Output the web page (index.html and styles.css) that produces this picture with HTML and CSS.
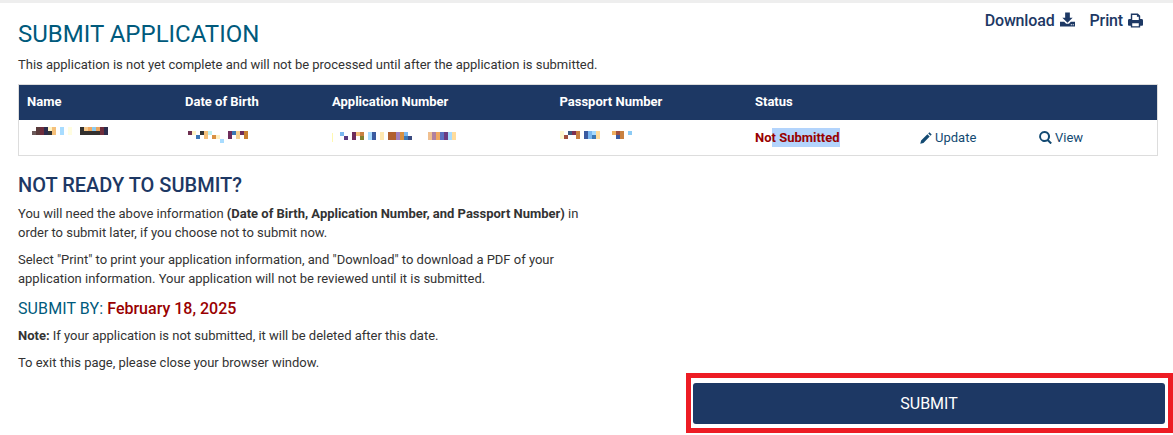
FILE: index.html
```html
<!DOCTYPE html>
<html lang="en">
<head>
    <meta charset="UTF-8">
    <meta name="viewport" content="width=device-width, initial-scale=1.0">
    <title>Submit Application</title>
    <link rel="stylesheet" href="styles.css">
</head>
<body>
    <div class="page">
        <div class="title-row">
            <h1>SUBMIT APPLICATION</h1>
            <div class="actions">
                <a href="#">Download
                    <svg class="action-icon" viewBox="0 0 16 15"><path d="M5.500 0h5v5.500h3L8 11 2.500 5.500h3zM0 10h4.500L6.500 12h3l2-2H16v5H0z"/><path fill="#fff" d="M11.500 12.500h1.200v1h-1.200zM13.500 12.500h1.200v1h-1.200z"/></svg>
                </a>
                <a href="#">Print
                    <svg class="action-icon print-icon" viewBox="0 0 16 15"><path fill-rule="evenodd" d="M3 0h7.500L13 2.500V6h1.500A1.500 1.500 0 0 1 16 7.500V12a1 1 0 0 1-1 1h-2v2H3v-2H1a1 1 0 0 1-1-1V7.500A1.500 1.500 0 0 1 1.500 6H3zM4.500 1.500V7h7V3.500H9.500v-2zM4.500 10.500v3h7v-3z"/></svg>
                </a>
            </div>
        </div>
        <p class="intro">This application is not yet complete and will not be processed until after the application is submitted.</p>

        <div class="app-table">
            <div class="app-row app-head">
                <div>Name</div>
                <div>Date of Birth</div>
                <div>Application Number</div>
                <div>Passport Number</div>
                <div>Status</div>
                <div></div>
                <div></div>
            </div>
            <div class="app-row app-body">
                <div class="cell-name">
                    <svg class="redact" width="84" height="12" viewBox="0 0 21 3">
                        <rect x="1" y="1" width="1" height="1" fill="#6b5a5a"/><rect x="2" width="1" height="2" fill="#5a3b3b"/><rect x="3" width="1" height="2" fill="#6e2d3c"/><rect x="4" width="1" height="2" fill="#2c2c4c"/><rect x="5" width="1" height="1" fill="#fff3c4"/><rect x="5" y="1" width="1" height="1" fill="#333"/><rect x="6" width="1" height="2" fill="#f5c07a"/><rect x="8" width="1" height="2" fill="#a8dcff"/><rect x="10" width="1" height="2" fill="#fffde0"/><rect x="13" width="1" height="2" fill="#33302e"/><rect x="14" width="1" height="1" fill="#f5c88a"/><rect x="15" width="1" height="1" fill="#f0a860"/><rect x="16" width="1" height="1" fill="#8ccbee"/><rect x="17" width="1" height="1" fill="#e9a45e"/><rect x="18" width="1" height="2" fill="#6e2d3c"/><rect x="19" width="1" height="2" fill="#2c2c4c"/><rect x="14" y="1" width="4" height="1" fill="#33302e"/>
                    </svg>
                </div>
                <div class="cell-dob">
                    <svg class="redact" width="64" height="12" viewBox="0 0 16 3">
                        <rect width="1" height="1" fill="#6e3050"/><rect x="1" width="1" height="1" fill="#fff3c4"/><rect x="2" y="1" width="1" height="1" fill="#3c78b4"/><rect x="3" width="1" height="1" fill="#333"/><rect x="4" width="1" height="2" fill="#f5c07a"/><rect x="5" width="1" height="1" fill="#bff0ee"/><rect x="6" y="1" width="1" height="1" fill="#d89040"/><rect x="7" y="1" width="1" height="1" fill="#ffefc0"/><rect x="8" y="2" width="1" height="1" fill="#a8dcff"/><rect x="10" width="1" height="2" fill="#6e2d5c"/><rect x="11" width="1" height="1" fill="#3c78b4"/><rect x="12" width="1" height="2" fill="#f5d090"/><rect x="13" width="1" height="1" fill="#6e2d5c"/><rect x="14" width="1" height="2" fill="#c88030"/>
                    </svg>
                </div>
                <div class="cell-app">
                    <svg class="redact" width="124" height="12" viewBox="0 0 31 3">
                        <rect y="0.250" width="0.250" height="2.250" fill="#fff8b0"/><rect x="2" width="1" height="1" fill="#7ab8f0"/><rect x="3" y="1" width="1" height="1" fill="#5a3a80"/><rect x="5" width="1" height="2" fill="#6e2d5c"/><rect x="6" width="1" height="1" fill="#f5c07a"/><rect x="7" width="1" height="1" fill="#c88040"/><rect x="7" y="1" width="1" height="1" fill="#808030"/><rect x="9" width="1" height="2" fill="#a8dcff"/><rect x="10" width="1" height="2" fill="#3a5aa0"/><rect x="12" width="1" height="2" fill="#ffe8b0"/><rect x="14" width="2" height="2" fill="#b06030"/><rect x="16" width="1" height="2" fill="#a080c0"/><rect x="17" width="1" height="2" fill="#d89040"/><rect x="18" width="1" height="1" fill="#7ab8f0"/><rect x="18" y="1" width="1" height="1" fill="#3c78b4"/><rect x="19" y="1" width="1" height="1" fill="#3a4a80"/><rect x="24" width="1" height="2" fill="#f0c090"/><rect x="25" width="1" height="2" fill="#b080a0"/><rect x="26" width="1" height="2" fill="#f0a860"/><rect x="27" width="1" height="2" fill="#5a70c0"/><rect x="28" width="1" height="2" fill="#6a3a80"/><rect x="29" width="1" height="2" fill="#a8dcff"/><rect x="30" width="1" height="2" fill="#ffdc9c"/>
                    </svg>
                </div>
                <div class="cell-pass">
                    <svg class="redact" width="72" height="12" viewBox="0 0 18 3">
                        <rect y="0" width="1" height="2" fill="#fff8d0"/><rect x="1" y="1" width="1" height="1" fill="#a05040"/><rect x="2" width="1" height="1" fill="#3c5a80"/><rect x="3" width="1" height="1" fill="#803050"/><rect x="4" width="1" height="2" fill="#c88040"/><rect x="6" width="1" height="2" fill="#3a5aa0"/><rect x="7" width="1" height="2" fill="#7ab8f0"/><rect x="8" width="1" height="1" fill="#a8dcff"/><rect x="8" y="1" width="1" height="1" fill="#3c78b4"/><rect x="9" width="1" height="2" fill="#ffdc9c"/><rect x="13" width="1" height="1" fill="#f0b060"/><rect x="14" width="1" height="1" fill="#a05040"/><rect x="14" y="1" width="1" height="1" fill="#3a5aa0"/><rect x="15" width="1" height="2" fill="#c88040"/><rect x="17" width="1" height="1" fill="#8ccbf5"/>
                    </svg>
                </div>
                <div><span class="status">No<mark>t Submitted</mark></span></div>
                <div>
                    <a href="#" class="row-link">
                        <svg class="row-icon" viewBox="0 0 13 13"><path d="M10.200.3 12.700 2.800 11.400 4.100 8.900 1.600zM8 2.500l2.500 2.500L3.700 11.800.3 12.700l.9-3.400z"/></svg>Update
                    </a>
                </div>
                <div>
                    <a href="#" class="row-link">
                        <svg class="row-icon search-icon" viewBox="0 0 13 13"><path fill-rule="evenodd" d="M5.500 0a5.500 5.500 0 0 1 4.400 8.800l3 3-1.400 1.400-3-3A5.500 5.500 0 1 1 5.500 0zM5.500 2a3.500 3.500 0 1 0 0 7 3.500 3.500 0 0 0 0-7z"/></svg>View
                    </a>
                </div>
            </div>
        </div>

        <h2>NOT READY TO SUBMIT?</h2>
        <div class="notes">
            <p>You will need the above information <b>(Date of Birth, Application Number, and Passport Number)</b> in order to submit later, if you choose not to submit now.</p>
            <p>Select "Print" to print your application information, and "Download" to download a PDF of your application information. Your application will not be reviewed until it is submitted.</p>
        </div>
        <h3>SUBMIT BY: <span class="deadline">February 18, 2025</span></h3>
        <div class="notes">
            <p><b>Note:</b> If your application is not submitted, it will be deleted after this date.</p>
            <p>To exit this page, please close your browser window.</p>
        </div>

        <div class="submit-row">
            <div class="submit-mark">
                <button class="submit-btn">SUBMIT</button>
            </div>
        </div>
    </div>
</body>
</html>
```

FILE: styles.css
```css
* {
    box-sizing: border-box;
}

body {
    margin: 0;
    font-family: Roboto, "Liberation Sans", sans-serif;
    font-size: 13px;
    color: #333;
    background: #fff;
    overflow: hidden;
}

a {
    color: #1d3864;
    text-decoration: none;
}

.page {
    border-top: 3px solid #eee;
    padding-left: 18px;
}

.title-row {
    display: flex;
    justify-content: space-between;
    align-items: flex-start;
    padding-top: 17px;
}

h1 {
    margin: 0;
    font-size: 24px;
    line-height: 28px;
    font-weight: 400;
    color: #005a7c;
}

.actions {
    display: flex;
    gap: 15px;
    margin-top: -9px;
    margin-right: 30px;
    font-size: 16px;
    line-height: 20px;
    font-weight: 500;
    letter-spacing: -0.15px;
}

.actions a {
    display: flex;
    align-items: center;
    gap: 5px;
}

.action-icon {
    width: 15px;
    height: 15px;
    margin-top: -3px;
    fill: #1d3864;
}

.print-icon {
    margin-top: -1px;
}

.intro {
    margin: 8px 0 10px;
    line-height: 18px;
    letter-spacing: -0.01px;
}

.app-table {
    width: 1140px;
    border: 1px solid #ddd;
}

.app-row {
    display: grid;
    grid-template-columns: 158px 147px 227.500px 195.500px 165px 119px 126px;
    align-items: center;
}

.app-row > div {
    padding-left: 8px;
}

.app-head {
    height: 35px;
    padding-bottom: 2px;
    background: #1d3864;
    color: #fff;
    font-weight: 700;
}

.app-body {
    height: 35px;
}

.redact {
    display: block;
}

.app-row .cell-name,
.app-row .cell-dob,
.app-row .cell-app,
.app-row .cell-pass {
    align-self: start;
}

.app-row .cell-name {
    padding: 7px 0 0 9px;
}

.app-row .cell-dob {
    padding: 11px 0 0 11px;
}

.app-row .cell-app {
    padding-top: 12px;
}

.app-row .cell-pass {
    padding-top: 11px;
}

.status {
    color: #900;
    font-weight: 700;
}

.status mark {
    padding: 2px 0;
    color: inherit;
    background: #b3d4fc;
}

.row-link {
    display: flex;
    align-items: center;
    gap: 3px;
    color: #134a72;
}

.row-icon {
    width: 12px;
    height: 12px;
    fill: #134a72;
}

.search-icon {
    width: 13px;
    height: 13px;
}

h2 {
    margin: 17px 0 7px;
    font-size: 20px;
    line-height: 24px;
    font-weight: 500;
    color: #1d3864;
}

.notes {
    width: 580px;
}

.notes p {
    margin: 0 0 8px;
    line-height: 19px;
    letter-spacing: -0.01px;
}

h3 {
    margin: 0 0 6px;
    padding-top: 2px;
    font-size: 16px;
    line-height: 22px;
    font-weight: 400;
    letter-spacing: 0.1px;
    color: #005a7c;
}

.deadline {
    color: #900;
    font-weight: 500;
    letter-spacing: 0;
}

.submit-row {
    display: flex;
    justify-content: flex-end;
    margin-top: -7px;
}

.submit-mark {
    width: 487px;
    height: 60px;
    padding: 5px 3px 4px 2px;
    border: 5px solid #ed1c24;
}

.submit-btn {
    display: block;
    width: 100%;
    height: 100%;
    border: none;
    border-radius: 3px;
    background: #1d3864;
    color: #fff;
    font-family: inherit;
    font-size: 16px;
}
```
